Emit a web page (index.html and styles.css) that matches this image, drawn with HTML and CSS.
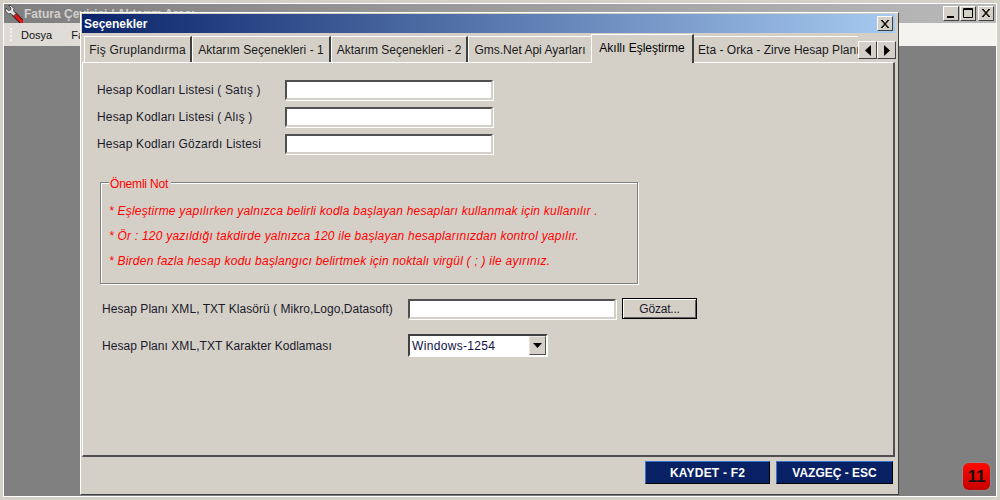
FILE: index.html
```html
<!DOCTYPE html>
<html lang="tr">
<head>
<meta charset="utf-8">
<title>Fatura Çevirici</title>
<link rel="stylesheet" href="styles.css">
</head>
<body>
<div class="app">
  <div class="app-title">
    <svg class="app-icon" width="18" height="18" viewBox="0 0 18 18">
      <path d="M9.500 9.500l7 7" stroke="#301010" stroke-width="5" stroke-linecap="round"/>
      <path d="M9.500 9.500l7 7" stroke="#e01818" stroke-width="3.200" stroke-linecap="round"/>
      <path d="M1 3l2.500 2.500 2-.5.500-2L3.500.5 6 .5l3 3-.5 2.500 2.500 2.500-2.500 2.500L6 8.500l-2.500.5-3-3z" fill="#e4e4e4" stroke="#3a3a3a" stroke-width=".8"/>
    </svg>
    <span class="app-name">Fatura Çevirici / Aktarım Aracı</span>
    <div class="win-btns">
      <span class="win-btn"><svg width="14" height="13" viewBox="0 0 14 13"><rect x="3" y="9" width="7" height="2" fill="#000"/></svg></span>
      <span class="win-btn"><svg width="14" height="13" viewBox="0 0 14 13"><path d="M2.500 1.500h9v9h-9zM2.500 2.500h9" fill="none" stroke="#000"/></svg></span>
      <span class="win-btn win-btn-close"><svg width="14" height="13" viewBox="0 0 14 13"><path d="M3 2l7 8M4 2l7 8M10 2l-7 8M11 2l-7 8" stroke="#000"/></svg></span>
    </div>
  </div>
  <div class="app-menu">
    <span class="gripper"></span>
    <span class="menu-item">Dosya</span>
    <span class="menu-item">Fatura</span>
  </div>
  <div class="mdi"></div>
</div>

<div class="dialog">
  <div class="dlg-title">
    <span>Seçenekler</span>
    <span class="dlg-close"><svg width="14" height="12" viewBox="0 0 14 12"><path d="M3 2l7 8M4 2l7 8M10 2l-7 8M11 2l-7 8" stroke="#000"/></svg></span>
  </div>
  <div class="tabs">
    <div class="tab tab-1">Fiş Gruplandırma</div>
    <div class="tab tab-2">Aktarım Seçenekleri - 1</div>
    <div class="tab tab-3">Aktarım Seçenekleri - 2</div>
    <div class="tab tab-4">Gms.Net Api Ayarları</div>
    <div class="tab tab-active">Akıllı Eşleştirme</div>
    <div class="tab tab-clip">Eta - Orka - Zirve Hesap Planı</div>
    <div class="scroller">
      <span class="scroll-btn"><svg width="8" height="11" viewBox="0 0 8 11"><path d="M7 0v11L1 5.500z" fill="#000"/></svg></span>
      <span class="scroll-btn"><svg width="8" height="11" viewBox="0 0 8 11"><path d="M1 0v11l6-5.500z" fill="#000"/></svg></span>
    </div>
  </div>
  <div class="panel">
    <div class="form-row">
      <label class="row-label">Hesap Kodları Listesi ( Satış )</label>
      <div class="field field-code"></div>
    </div>
    <div class="form-row">
      <label class="row-label">Hesap Kodları Listesi ( Alış )</label>
      <div class="field field-code"></div>
    </div>
    <div class="form-row">
      <label class="row-label">Hesap Kodları Gözardı Listesi</label>
      <div class="field field-code"></div>
    </div>
    <div class="note">
      <span class="note-legend">Önemli Not</span>
      <p>* Eşleştirme yapılırken yalnızca belirli kodla başlayan hesapları kullanmak için kullanılır .</p>
      <p>* Ör : 120 yazıldığı takdirde yalnızca 120 ile başlayan hesaplarınızdan kontrol yapılır.</p>
      <p>* Birden fazla hesap kodu başlangıcı belirtmek için noktalı virgül ( ; ) ile ayırınız.</p>
    </div>
    <div class="path-row">
      <label class="wide-label">Hesap Planı XML, TXT Klasörü ( Mikro,Logo,Datasoft)</label>
      <div class="field field-code"></div>
      <button class="browse" type="button">Gözat...</button>
    </div>
    <div class="enc-row">
      <label class="wide-label">Hesap Planı XML,TXT Karakter Kodlaması</label>
      <div class="combo">
        <span class="combo-text">Windows-1254</span>
        <span class="combo-btn"><svg width="9" height="5" viewBox="0 0 9 5"><path d="M0 0h9L4.500 5z" fill="#000"/></svg></span>
      </div>
    </div>
  </div>
  <div class="dlg-footer">
    <button class="action action-save" type="button">KAYDET - F2</button>
    <button class="action action-cancel" type="button">VAZGEÇ - ESC</button>
  </div>
</div>

<div class="badge">11</div>
</body>
</html>
```
FILE: styles.css
```css
* { box-sizing: border-box; }
html, body { margin: 0; padding: 0; }
body {
  width: 1000px;
  height: 500px;
  overflow: hidden;
  position: relative;
  background: #d4d0c8;
  font-family: "Liberation Sans", Arial, sans-serif;
  font-size: 12px;
  color: #000;
}
.app {
  width: 1000px;
  height: 500px;
  border: 3px solid #d4d0c8;
  padding: 1px;
  display: flex;
  flex-direction: column;
  background: #fff;
}
.app-title {
  height: 19px;
  flex: none;
  padding: 0 2px 0 1px;
  display: flex;
  align-items: center;
  gap: 1px;
  background: linear-gradient(90deg, #7f7f7f, #b9b9b9);
}
.app-icon { flex: none; }
.app-name { font-weight: bold; font-size: 12px; color: #d2d0cc; }
.win-btns { margin-left: auto; display: flex; gap: 1px; }
.win-btn {
  width: 16px;
  height: 15px;
  background: #d4d0c8;
  border: 1px solid;
  border-color: #fff #404040 #404040 #fff;
  display: flex;
  align-items: center;
  justify-content: center;
}
.win-btn-close { margin-left: 1px; }
.app-menu {
  height: 23px;
  flex: none;
  display: flex;
  align-items: center;
  background: linear-gradient(90deg, #dedbd6, #f6f5f2);
  padding-left: 6px;
  font-size: 11px;
  color: #111;
}
.gripper { width: 2px; height: 13px; margin-right: 9px; border-left: 2px dotted #f4f4f4; }
.menu-item { margin-right: 19px; }
.mdi { flex: 1; background: #808080; }

.dialog {
  position: absolute;
  left: 80px;
  top: 12px;
  width: 819px;
  height: 483px;
  background: #d4d0c8;
  border: 1px solid;
  border-color: #fff #404040 #404040 #fff;
  padding: 1px 2px 1px 1px;
  display: flex;
  flex-direction: column;
}
.dlg-title {
  height: 19px;
  width: 813px;
  flex: none;
  display: flex;
  align-items: center;
  justify-content: space-between;
  padding: 0 2px;
  color: #fff;
  font-weight: bold;
  font-size: 12px;
  background: linear-gradient(90deg, #0a246a, #a6caf0);
}
.dlg-close {
  width: 16px;
  height: 15px;
  background: #d4d0c8;
  border: 1px solid;
  border-color: #fff #404040 #404040 #fff;
  display: flex;
  align-items: center;
  justify-content: center;
}
.tabs {
  height: 29px;
  flex: none;
  display: flex;
  align-items: flex-end;
  padding-left: 2px;
  position: relative;
  z-index: 1;
  width: 814px;
}
.tab {
  height: 26px;
  padding-top: 6px;
  text-align: center;
  border: 1px solid;
  border-color: #fff #404040 transparent #fff;
  border-bottom: 0;
  border-right-width: 2px;
  flex: none;
  color: #1a1a1a;
  white-space: nowrap;
  letter-spacing: .25px;
}
.tab-1 { width: 108px; }
.tab-2 { width: 139px; letter-spacing: .04px; }
.tab-3 { width: 137px; letter-spacing: 0; }
.tab-4 { width: 123px; border-right: 0; letter-spacing: 0; }
.tab-active {
  width: 103px;
  height: 29px;
  margin-bottom: -1px;
  padding-top: 6px;
  background: #d4d0c8;
  color: #000;
  letter-spacing: 0;
}
.tab-clip {
  width: 164px;
  overflow: hidden;
  text-align: left;
  padding-left: 4px;
  border-left: 0;
  border-right: 0;
  letter-spacing: .03px;
}
.scroller {
  position: absolute;
  right: 0;
  top: 8px;
  display: flex;
}
.scroll-btn {
  width: 19px;
  height: 18px;
  background: #d4d0c8;
  border: 1px solid;
  border-color: #fff #404040 #404040 #fff;
  display: flex;
  align-items: center;
  justify-content: center;
}
.panel {
  height: 395px;
  width: 813px;
  flex: none;
  border: 1px solid;
  border-color: #fff #505050 #505050 #fff;
  border-right-width: 2px;
  border-bottom-width: 2px;
  padding: 16px 0 0 14px;
}
.form-row {
  display: flex;
  align-items: center;
  height: 21px;
  margin-bottom: 6px;
  color: #1a1a2a;
}
.row-label { width: 188px; flex: none; letter-spacing: .16px; }
.field {
  background: #fff;
  border: 2px solid;
  border-color: #505050 #d4d0c8 #d4d0c8 #505050;
  box-shadow: 1px 1px 0 #fff;
  height: 20px;
}
.field-code { width: 208px; flex: none; }
.note {
  position: relative;
  width: 538px;
  height: 102px;
  margin: 28px 0 0 3px;
  border: 1px solid #808080;
  box-shadow: inset 1px 1px 0 #fff, 1px 1px 0 #fff;
  padding: 21px 0 0 8px;
  color: #ff0000;
  font-style: italic;
  letter-spacing: .23px;
}
.note p { margin: 0 0 11px; height: 14px; line-height: 14px; }
.note-legend {
  position: absolute;
  left: 8px;
  top: -6px;
  padding: 0 3px 0 1px;
  background: #d4d0c8;
  font-style: normal;
  line-height: 14px;
  letter-spacing: -.2px;
}
.path-row, .enc-row {
  display: flex;
  align-items: center;
  margin-left: 5px;
  color: #1a1a2a;
}
.path-row { margin-top: 14px; height: 21px; }
.enc-row { margin-top: 15px; height: 23px; }
.wide-label { width: 306px; flex: none; letter-spacing: .05px; }
.browse {
  width: 75px;
  height: 21px;
  margin-left: 6px;
  padding: 0;
  background: #d4d0c8;
  border: 1px solid #000;
  box-shadow: inset 1px 1px 0 #fff, inset -1px -1px 0 #606060;
  font: inherit;
  letter-spacing: -.2px;
  color: #1a1a2a;
}
.combo {
  width: 140px;
  height: 23px;
  background: #fff;
  border: 2px solid;
  border-color: #404040 #fff #fff #404040;
  display: flex;
  align-items: center;
  justify-content: space-between;
  padding-left: 2px;
  color: #10104a;
  letter-spacing: .33px;
}
.combo-btn {
  width: 17px;
  height: 19px;
  background: #d4d0c8;
  border: 1px solid;
  border-color: #e8e6e0 #505050 #505050 #e8e6e0;
  display: flex;
  align-items: center;
  justify-content: center;
}
.dlg-footer {
  flex: 1;
  display: flex;
  justify-content: flex-end;
  align-items: flex-start;
  gap: 6px;
  padding: 4px 3px 0 0;
}
.action {
  height: 23px;
  padding: 0;
  background: #082064;
  color: #fff;
  font: bold 12px "Liberation Sans", Arial, sans-serif;
  border: 1px solid;
  border-color: #3a6fc8 #000 #000 #3a6fc8;
}
.action-save { width: 125px; letter-spacing: .2px; }
.action-cancel { width: 117px; }
.badge {
  position: absolute;
  left: 962px;
  top: 462px;
  width: 29px;
  height: 29px;
  border-radius: 7px;
  border: 1px solid #8a8a8a;
  background: linear-gradient(180deg, #ff0a00, #c80000);
  color: #111;
  font-size: 17px;
  font-weight: bold;
  line-height: 27px;
  text-align: center;
}
```
